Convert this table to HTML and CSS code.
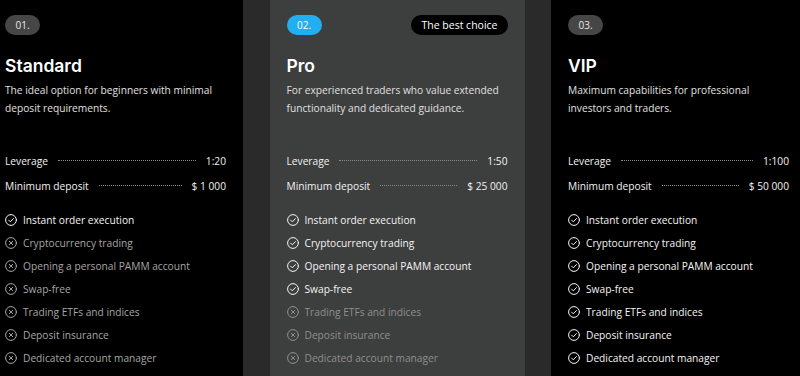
FILE: index.html
```html
<!DOCTYPE html>
<html lang="en">
<head>
    <meta charset="UTF-8">
    <meta name="viewport" content="width=device-width, initial-scale=1.0">
    <title>Account types</title>
    <link rel="stylesheet" href="styles.css">
</head>
<body>
<div class="plans">
    <div class="plan">
        <div class="plan-top">
            <span class="num">01.</span>
        </div>
        <h2>Standard</h2>
        <p class="desc">The ideal option for beginners with minimal deposit requirements.</p>
        <div class="terms">
            <div class="term"><span>Leverage</span><i class="dots"></i><span>1:20</span></div>
            <div class="term"><span>Minimum deposit</span><i class="dots"></i><span>$ 1 000</span></div>
        </div>
        <ul class="features">
            <li class="on"><svg viewBox="0 0 12 12"><circle cx="6" cy="6" r="5.4"/><path d="M3.6 6.1 5.3 7.8 8.4 4.6"/></svg>Instant order execution</li>
            <li class="off"><svg viewBox="0 0 12 12"><circle cx="6" cy="6" r="5.4"/><path d="M4.3 4.3 7.7 7.7M7.7 4.3 4.3 7.7"/></svg>Cryptocurrency trading</li>
            <li class="off"><svg viewBox="0 0 12 12"><circle cx="6" cy="6" r="5.4"/><path d="M4.3 4.3 7.7 7.7M7.7 4.3 4.3 7.7"/></svg>Opening a personal PAMM account</li>
            <li class="off"><svg viewBox="0 0 12 12"><circle cx="6" cy="6" r="5.4"/><path d="M4.3 4.3 7.7 7.7M7.7 4.3 4.3 7.7"/></svg>Swap-free</li>
            <li class="off"><svg viewBox="0 0 12 12"><circle cx="6" cy="6" r="5.4"/><path d="M4.3 4.3 7.7 7.7M7.7 4.3 4.3 7.7"/></svg>Trading ETFs and indices</li>
            <li class="off"><svg viewBox="0 0 12 12"><circle cx="6" cy="6" r="5.4"/><path d="M4.3 4.3 7.7 7.7M7.7 4.3 4.3 7.7"/></svg>Deposit insurance</li>
            <li class="off"><svg viewBox="0 0 12 12"><circle cx="6" cy="6" r="5.4"/><path d="M4.3 4.3 7.7 7.7M7.7 4.3 4.3 7.7"/></svg>Dedicated account manager</li>
        </ul>
    </div>

    <div class="plan plan-best">
        <div class="plan-top">
            <span class="num num-blue">02.</span>
            <span class="best">The best choice</span>
        </div>
        <h2>Pro</h2>
        <p class="desc">For experienced traders who value extended functionality and dedicated guidance.</p>
        <div class="terms">
            <div class="term"><span>Leverage</span><i class="dots"></i><span>1:50</span></div>
            <div class="term"><span>Minimum deposit</span><i class="dots"></i><span>$ 25 000</span></div>
        </div>
        <ul class="features">
            <li class="on"><svg viewBox="0 0 12 12"><circle cx="6" cy="6" r="5.4"/><path d="M3.6 6.1 5.3 7.8 8.4 4.6"/></svg>Instant order execution</li>
            <li class="on"><svg viewBox="0 0 12 12"><circle cx="6" cy="6" r="5.4"/><path d="M3.6 6.1 5.3 7.8 8.4 4.6"/></svg>Cryptocurrency trading</li>
            <li class="on"><svg viewBox="0 0 12 12"><circle cx="6" cy="6" r="5.4"/><path d="M3.6 6.1 5.3 7.8 8.4 4.6"/></svg>Opening a personal PAMM account</li>
            <li class="on"><svg viewBox="0 0 12 12"><circle cx="6" cy="6" r="5.4"/><path d="M3.6 6.1 5.3 7.8 8.4 4.6"/></svg>Swap-free</li>
            <li class="off"><svg viewBox="0 0 12 12"><circle cx="6" cy="6" r="5.4"/><path d="M4.3 4.3 7.7 7.7M7.7 4.3 4.3 7.7"/></svg>Trading ETFs and indices</li>
            <li class="off"><svg viewBox="0 0 12 12"><circle cx="6" cy="6" r="5.4"/><path d="M4.3 4.3 7.7 7.7M7.7 4.3 4.3 7.7"/></svg>Deposit insurance</li>
            <li class="off"><svg viewBox="0 0 12 12"><circle cx="6" cy="6" r="5.4"/><path d="M4.3 4.3 7.7 7.7M7.7 4.3 4.3 7.7"/></svg>Dedicated account manager</li>
        </ul>
    </div>

    <div class="plan">
        <div class="plan-top">
            <span class="num">03.</span>
        </div>
        <h2>VIP</h2>
        <p class="desc">Maximum capabilities for professional investors and traders.</p>
        <div class="terms">
            <div class="term"><span>Leverage</span><i class="dots"></i><span>1:100</span></div>
            <div class="term"><span>Minimum deposit</span><i class="dots"></i><span>$ 50 000</span></div>
        </div>
        <ul class="features">
            <li class="on"><svg viewBox="0 0 12 12"><circle cx="6" cy="6" r="5.4"/><path d="M3.6 6.1 5.3 7.8 8.4 4.6"/></svg>Instant order execution</li>
            <li class="on"><svg viewBox="0 0 12 12"><circle cx="6" cy="6" r="5.4"/><path d="M3.6 6.1 5.3 7.8 8.4 4.6"/></svg>Cryptocurrency trading</li>
            <li class="on"><svg viewBox="0 0 12 12"><circle cx="6" cy="6" r="5.4"/><path d="M3.6 6.1 5.3 7.8 8.4 4.6"/></svg>Opening a personal PAMM account</li>
            <li class="on"><svg viewBox="0 0 12 12"><circle cx="6" cy="6" r="5.4"/><path d="M3.6 6.1 5.3 7.8 8.4 4.6"/></svg>Swap-free</li>
            <li class="on"><svg viewBox="0 0 12 12"><circle cx="6" cy="6" r="5.4"/><path d="M3.6 6.1 5.3 7.8 8.4 4.6"/></svg>Trading ETFs and indices</li>
            <li class="on"><svg viewBox="0 0 12 12"><circle cx="6" cy="6" r="5.4"/><path d="M3.6 6.1 5.3 7.8 8.4 4.6"/></svg>Deposit insurance</li>
            <li class="on"><svg viewBox="0 0 12 12"><circle cx="6" cy="6" r="5.4"/><path d="M3.6 6.1 5.3 7.8 8.4 4.6"/></svg>Dedicated account manager</li>
        </ul>
    </div>
</div>
</body>
</html>
```

FILE: styles.css
```css
/* Account types */
body {
    margin: 0;
    width: 800px;
    height: 376px;
    overflow: hidden;
    background: #2a2a2a;
    font-family: 'Open Sans', 'Noto Sans', sans-serif;
    color: #f2f2f2;
}

.plans {
    display: flex;
    gap: 26.5px;
    margin-left: -12px;
}

.plan {
    flex: 0 0 255px;
    box-sizing: border-box;
    height: 376px;
    padding: 15px 17px 0;
    background: #000000;
}

.plan-best {
    background: #3d3e3e;
}

.plan-top {
    display: flex;
    justify-content: space-between;
    align-items: center;
    height: 20px;
}

.num {
    display: flex;
    align-items: center;
    justify-content: center;
    width: 35px;
    height: 20px;
    border-radius: 10px;
    background: #464646;
    font-size: 10px;
    color: #e6e6e6;
}

.num-blue {
    background: #22aef0;
    color: #ffffff;
}

.best {
    display: flex;
    align-items: center;
    height: 20px;
    padding: 0 10px;
    border-radius: 10px;
    background: #000000;
    font-size: 10.5px;
    color: #ffffff;
}

h2 {
    margin: 20px 0 4px;
    font-family: 'Inter', sans-serif;
    font-size: 17.5px;
    font-weight: 600;
    line-height: 22px;
    color: #ffffff;
}

.desc {
    margin: 0;
    font-size: 10.2px;
    line-height: 18px;
    color: #e0e0e0;
}

.terms {
    margin-top: 31px;
}

.term {
    display: flex;
    align-items: center;
    height: 25px;
    font-size: 10.2px;
}

.dots {
    flex: 1;
    margin: 0 10px;
    border-top: 1px dotted #8a8a8a;
}

.features {
    list-style: none;
    margin: 10px 0 0;
    padding: 0;
}

.features li {
    display: flex;
    align-items: center;
    gap: 6px;
    height: 23px;
    font-size: 10.2px;
}

.features svg {
    width: 12px;
    height: 12px;
    fill: none;
    stroke: currentColor;
    stroke-width: 1;
    stroke-linecap: round;
    stroke-linejoin: round;
}

.features .on {
    color: #f4f4f4;
}

.features .off {
    color: #a6a6a6;
}

.plan-best .features .off {
    color: #8f8f8f;
}
```
